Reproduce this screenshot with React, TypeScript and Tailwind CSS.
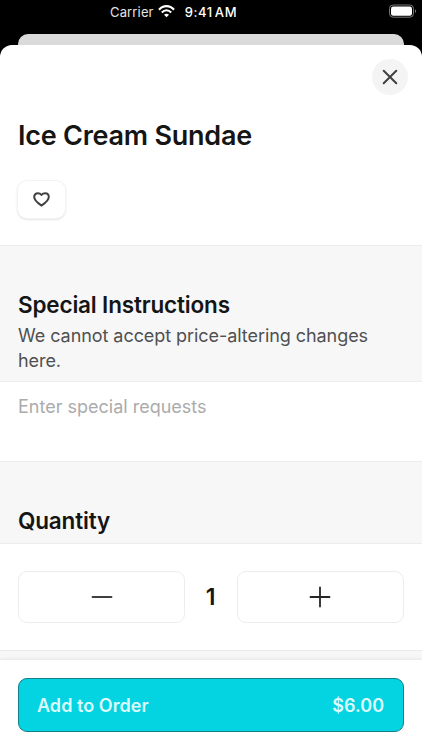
import { useState } from 'react'
import type { ReactNode } from 'react'

const ITEM = {
  name: 'Ice Cream Sundae',
  price: 6,
}

function StatusBar() {
  return (
    <div className="relative flex h-[34px] items-start text-[13px] leading-[16px] text-white">
      <span className="ml-[110px] mt-1 tracking-[0.15px] text-[#e4e4e4]">Carrier</span>
      <svg className="ml-[4px] mt-[5px] h-[13px] w-[17px]" viewBox="0 0 17 13" fill="none">
        <path d="M1 4.8C5.2 -0.1 11.8 -0.1 16 4.8" stroke="white" strokeWidth="2.1" />
        <path d="M3.8 7.5C6.6 4.5 10.4 4.5 13.2 7.5" stroke="white" strokeWidth="2" />
        <path d="M8.5 12.3L6 9.8C7.4 8.5 9.6 8.5 11 9.8L8.5 12.3Z" fill="white" />
      </svg>
      <span className="ml-[10px] mt-1 font-medium tracking-[0.6px] [word-spacing:-2px]">9:41 AM</span>
      <svg className="absolute right-[5px] top-[4px] h-[14px] w-[28px]" viewBox="0 0 28 14" fill="none">
        <rect x="0.5" y="1" width="24" height="12.2" rx="3.6" stroke="#777777" />
        <rect x="2" y="2.5" width="21" height="9.2" rx="2.2" fill="white" />
        <path d="M26 5.2C27.4 5.8 27.4 8.4 26 9V5.2Z" fill="#777777" />
      </svg>
    </div>
  )
}

interface StepButtonProps {
  label: string
  onClick: () => void
  children: ReactNode
}

function StepButton({ label, onClick, children }: StepButtonProps) {
  return (
    <button
      aria-label={label}
      onClick={onClick}
      className="flex h-[52px] w-[167px] items-center justify-center rounded-[9px] border border-[#ededed] bg-white"
    >
      {children}
    </button>
  )
}

export default function App() {
  const [quantity, setQuantity] = useState(1)
  const [liked, setLiked] = useState(false)

  return (
    <div className="h-[750px] w-[422px] overflow-hidden bg-black font-['Inter',sans-serif] text-[#151515]">
      <StatusBar />
      {/* Edge of the screen behind the sheet */}
      <div className="mx-[18px] -mb-3 h-[23px] rounded-t-[10px] bg-[#dadada]" />

      <div className="relative flex h-[705px] flex-col overflow-hidden rounded-t-[12px] bg-white">
        <section className="h-[200px] shrink-0 px-[18px] pt-[14px]">
          <div className="-mr-[4px] flex justify-end">
            <button
              aria-label="Close"
              className="flex size-[36px] items-center justify-center rounded-full bg-[#f4f4f4]"
            >
              <svg className="size-[16px]" viewBox="0 0 16 16" fill="none">
                <path d="M1.7 1.7L14.3 14.3M14.3 1.7L1.7 14.3" stroke="#404040" strokeWidth="2" strokeLinecap="round" />
              </svg>
            </button>
          </div>
          <h1 className="mt-[24px] text-[27px] leading-[34px] font-semibold tracking-[-0.24px]">{ITEM.name}</h1>
          <button
            aria-label="Favorite"
            onClick={() => setLiked(!liked)}
            className="mt-[28px] flex h-[37px] w-[47px] items-center justify-center rounded-[9px] bg-white shadow-[0_0_0_1px_#f3f3f3,0_1px_3px_rgba(0,0,0,0.22)]"
          >
            <svg className="h-[15px] w-[17px]" viewBox="0 0 17 15" fill={liked ? '#404040' : 'none'}>
              <path
                d="M8.5 13.6C5.2 11.3 1.2 8.6 1.2 5C1.2 2.7 2.8 1.2 4.8 1.2C6.4 1.2 7.6 1.8 8.5 3C9.4 1.8 10.6 1.2 12.2 1.2C14.2 1.2 15.8 2.7 15.8 5C15.8 8.6 11.8 11.3 8.5 13.6Z"
                stroke="#404040"
                strokeWidth="2"
                strokeLinejoin="round"
              />
            </svg>
          </button>
        </section>

        <section className="h-[137px] shrink-0 border-y border-[#ededed] bg-[#f7f7f7] px-[18px] pt-[45px]">
          <h2 className="text-[22.5px] leading-[27px] font-semibold tracking-[-0.17px]">Special Instructions</h2>
          <p className="mt-[5px] text-[18px] leading-[25px] tracking-[-0.06px] text-[#505050]">
            We cannot accept price-altering changes here.
          </p>
        </section>

        <textarea
          placeholder="Enter special requests"
          className="block h-[79px] w-full shrink-0 resize-none px-[18px] pt-[12px] text-[18px] leading-[25px] outline-none placeholder:text-[#ababab]"
        />

        <section className="h-[83px] shrink-0 border-y border-[#ededed] bg-[#f7f7f7] px-[18px] pt-[45px]">
          <h2 className="text-[22.5px] leading-[27px] font-semibold tracking-[-0.17px]">Quantity</h2>
        </section>

        <section className="flex h-[106px] shrink-0 items-center justify-between px-[18px]">
          <StepButton label="Decrease" onClick={() => setQuantity(Math.max(1, quantity - 1))}>
            <svg className="size-[22px]" viewBox="0 0 22 22" fill="none">
              <path d="M1.5 11H20.5" stroke="#404040" strokeWidth="1.9" strokeLinecap="round" />
            </svg>
          </StepButton>
          <span className="-ml-px text-[23px] leading-[28px] font-semibold">{quantity}</span>
          <StepButton label="Increase" onClick={() => setQuantity(quantity + 1)}>
            <svg className="-ml-px size-[22px]" viewBox="0 0 22 22" fill="none">
              <path d="M1.5 11H20.5M11 1.5V20.5" stroke="#252525" strokeWidth="1.8" strokeLinecap="round" />
            </svg>
          </StepButton>
        </section>

        <div className="flex-1 border-t border-[#ebebeb] bg-[#f7f7f7]" />

        <footer className="h-[90px] shrink-0 bg-white px-[18px] pt-[18px] shadow-[0_-1px_3px_rgba(0,0,0,0.08)]">
          <button className="flex h-[54px] w-full items-center justify-between rounded-[9px] border border-[#137f87] bg-[#04d4e2] px-[19px] pt-[2px] text-[18px] leading-[24px] font-semibold text-[#dcfbfd]">
            <span className="-ml-px tracking-[0.05px]">Add to Order</span>
            <span>${(ITEM.price * quantity).toFixed(2)}</span>
          </button>
        </footer>
      </div>
    </div>
  )
}
